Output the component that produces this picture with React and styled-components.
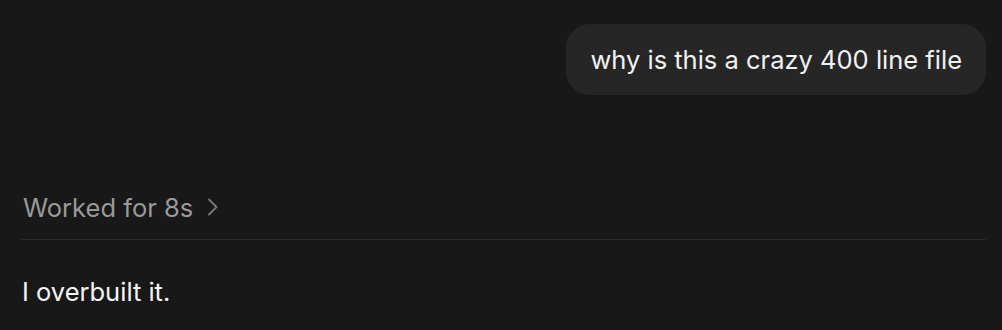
import React from "react"
import styled, { createGlobalStyle } from "styled-components"

const GlobalStyle = createGlobalStyle`
  html, body {
    margin: 0;
    padding: 0;
    background: #181818;
  }
  body {
    font-family: Inter, "Noto Sans", sans-serif;
    -webkit-font-smoothing: antialiased;
  }
`

const Thread = styled.div`
  display: flex;
  flex-direction: column;
  padding: 24px 16px 0 21px;
`

const UserRow = styled.div`
  display: flex;
  justify-content: flex-end;
`

const Bubble = styled.div`
  background: #262626;
  color: #f2f2f2;
  font-size: 25.5px;
  line-height: 33px;
  padding: 19px 24px;
  border-radius: 24px;
`

const WorkedRow = styled.button`
  display: flex;
  align-items: center;
  gap: 13px;
  margin-top: 96px;
  padding: 0 0 0 2px;
  height: 32px;
  background: none;
  border: none;
  color: #9a9a9a;
  font-family: inherit;
  font-size: 25.5px;
  cursor: pointer;
  align-self: flex-start;
`

const Divider = styled.div`
  height: 1px;
  background: #2b2b2b;
  margin-top: 16px;
`

const Reply = styled.p`
  margin: 36px 0 0 1px;
  color: #f4f4f4;
  font-size: 25.5px;
  line-height: 32px;
`

const Chevron = () => (
  <svg width="12" height="20" viewBox="0 0 12 20" fill="none">
    <path d="M3 2.5l7.5 7.5-7.5 7.5" stroke="#7a7a7a" strokeWidth="1.8" strokeLinecap="round" strokeLinejoin="round" />
  </svg>
)

export default function App() {
  return (
    <>
      <GlobalStyle />
      <Thread>
        <UserRow>
          <Bubble>why is this a crazy 400 line file</Bubble>
        </UserRow>
        <WorkedRow>
          Worked for 8s
          <Chevron />
        </WorkedRow>
        <Divider />
        <Reply>I overbuilt it.</Reply>
      </Thread>
    </>
  )
}
